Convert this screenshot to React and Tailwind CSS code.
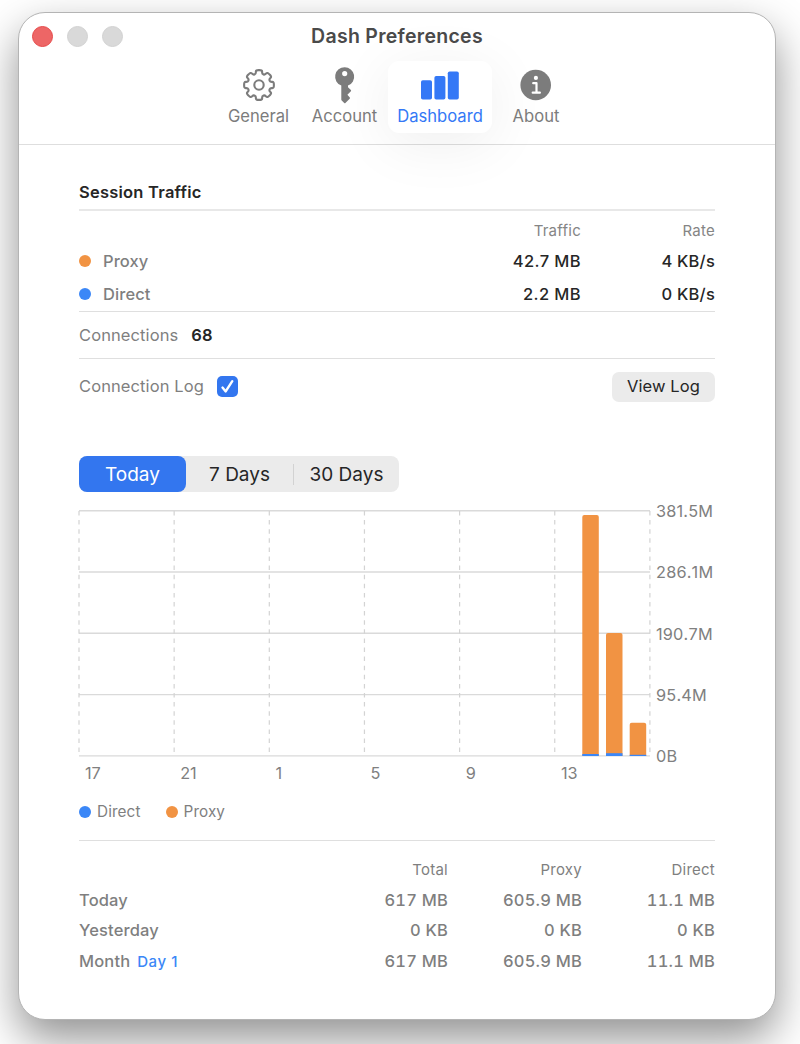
import React from "react";
import clsx from "clsx";

const ORANGE = "#f19343";
const BLUE = "#3b87f7";

// Walks round the cog and rounds every corner with a quadratic curve
function gearPath(cx, cy) {
  const points = [];
  for (let i = 0; i < 8; i++) {
    const a = i * 45;
    [
      [11.6, a - 15.5],
      [15.2, a - 12],
      [15.2, a + 12],
      [11.6, a + 15.5],
    ].forEach(([r, deg]) => {
      const rad = ((deg - 90) * Math.PI) / 180;
      points.push([cx + r * Math.cos(rad), cy + r * Math.sin(rad)]);
    });
  }
  const lerp = (p, q, t) => [p[0] + (q[0] - p[0]) * t, p[1] + (q[1] - p[1]) * t];
  const fmt = (p) => `${p[0].toFixed(2)} ${p[1].toFixed(2)}`;
  return (
    points
      .map((p, i) => {
        const prev = points[(i + points.length - 1) % points.length];
        const next = points[(i + 1) % points.length];
        return `${i === 0 ? "M" : "L"}${fmt(lerp(p, prev, 0.42))}Q${fmt(p)} ${fmt(lerp(p, next, 0.42))}`;
      })
      .join("") + "Z"
  );
}

function GearIcon() {
  return (
    <svg width="34" height="40" viewBox="0 0 34 40" fill="none" stroke="currentColor" strokeWidth="2.1">
      <path d={gearPath(17, 20)} strokeLinejoin="round" />
      <circle cx="17" cy="20" r="4.7" />
    </svg>
  );
}

function KeyIcon() {
  return (
    <svg width="34" height="40" viewBox="0 0 34 40" fill="currentColor">
      <path
        fillRule="evenodd"
        d="M16.7 2.2a9.5 9.5 0 0 0-3.4 18.4v13.8q0 .6.4 1l2.5 2.6q.6.6 1.2 0l4.3-4.2q.6-.6.1-1.2l-2.4-2.8 3.5-3.6q.5-.6 0-1.2l-2.9-2.8v-1.6A9.5 9.5 0 0 0 16.7 2.2Zm0 3.8a2.6 2.6 0 1 1 0 5.2 2.6 2.6 0 0 1 0-5.2Z"
      />
    </svg>
  );
}

function BarsIcon() {
  return (
    <svg width="40" height="40" viewBox="0 0 40 40" fill="currentColor">
      <rect x="1" y="15.2" width="11" height="19.3" rx="1.8" />
      <rect x="14.4" y="11" width="11" height="23.5" rx="1.8" />
      <rect x="27.8" y="6.5" width="11" height="28" rx="1.8" />
    </svg>
  );
}

function InfoIcon() {
  return (
    <svg width="34" height="40" viewBox="0 0 34 40">
      <circle cx="16.7" cy="20" r="15.3" fill="currentColor" />
      <circle cx="16.9" cy="12.9" r="2.1" fill="#fff" />
      <path d="M14.2 18.2h3.3v9.5M13.7 27.7h7.2" fill="none" stroke="#fff" strokeWidth="2.2" strokeLinecap="round" strokeLinejoin="round" />
    </svg>
  );
}

const tabs = [
  { label: "General", Icon: GearIcon, width: "w-[85px]" },
  { label: "Account", Icon: KeyIcon, width: "w-[85px]" },
  { label: "Dashboard", Icon: BarsIcon, width: "w-[104px]", active: true },
  { label: "About", Icon: InfoIcon, width: "w-[86px]" },
];

function Toolbar() {
  return (
    <header className="h-[132px] border-b border-[#dedede]">
      <div className="grid h-[47px] grid-cols-[1fr_auto_1fr] items-center">
        <div className="flex gap-3.5 pl-[13px]">
          <span className="size-[21px] rounded-full border border-[#e64a4a] bg-[#ed6666]" />
          <span className="size-[21px] rounded-full border border-[#d2d2d2] bg-[#d9d9d9]" />
          <span className="size-[21px] rounded-full border border-[#d2d2d2] bg-[#d9d9d9]" />
        </div>
        <h1 className="pt-px text-[19.5px] font-semibold tracking-[0.28px] text-[#4a4a4a]">Dash Preferences</h1>
      </div>
      <nav className="flex gap-px pl-[197px] pt-px">
        {tabs.map(({ label, Icon, width, active }) => (
          <button
            key={label}
            className={clsx(
              "flex h-[72px] flex-col items-center rounded-[11px] pt-[4px]",
              width,
              active ? "bg-white text-[#3478f6] shadow-[0_10px_60px_rgba(0,0,0,0.07)]" : "text-[#7c7c7c]"
            )}
          >
            <Icon />
            <span className="text-[16.6px] leading-[22px]">{label}</span>
          </button>
        ))}
      </nav>
    </header>
  );
}

function Dot({ color }) {
  return <span className={clsx("size-3 rounded-full", color)} />;
}

function SessionRow({ color, label, traffic, rate }) {
  return (
    <div className="grid h-[33px] grid-cols-[1fr_134px_134px] items-center">
      <div className="flex items-center gap-3 font-medium text-[#7f7f7f]">
        <Dot color={color} />
        <span className="pt-px">{label}</span>
      </div>
      <div className="pt-px text-right font-medium tracking-[0.4px] text-[#262626]">{traffic}</div>
      <div className="pt-px text-right font-medium tracking-[0.2px] text-[#262626]">{rate}</div>
    </div>
  );
}

function Session() {
  return (
    <section className="text-[16.5px] tracking-[0.1px]">
      <h2 className="flex h-[36px] items-center border-b-2 border-[#e8e8e8] pt-px font-semibold tracking-[0.23px] text-[#262626]">Session Traffic</h2>
      <div className="grid h-[33px] grid-cols-[1fr_134px_134px] items-center pt-2 text-right text-[15px] tracking-[0.25px] text-[#858585]">
        <span />
        <span>Traffic</span>
        <span>Rate</span>
      </div>
      <SessionRow color="bg-[#f19343]" label="Proxy" traffic="42.7 MB" rate="4 KB/s" />
      <SessionRow color="bg-[#3b87f7]" label="Direct" traffic="2.2 MB" rate="0 KB/s" />
      <div className="mt-px flex h-12 items-center gap-[13px] border-y border-[#dfdfdf] text-[#7f7f7f]">
        Connections
        <span className="font-semibold text-[#262626]">68</span>
      </div>
      <div className="flex h-14 items-center justify-between pb-px">
        <label className="flex items-center gap-[13px] text-[#7f7f7f]">
          Connection Log
          <span className="flex size-[21px] items-center justify-center rounded-[5px] bg-[#3376ef]">
            <svg width="15" height="15" viewBox="0 0 15 15" fill="none" stroke="#fff" strokeWidth="2.4" strokeLinecap="round" strokeLinejoin="round">
              <path d="M2.5 8.6l3.2 3.8 6.6-10.2" />
            </svg>
          </span>
        </label>
        <button className="h-[30px] w-[103px] rounded-[7px] bg-[#ebebeb] text-[#262626]">View Log</button>
      </div>
    </section>
  );
}

function RangePicker() {
  return (
    <div className="flex h-9 w-[320px] items-center rounded-[8px] bg-[#ebebeb] text-[19px] text-[#262626]">
      <button className="h-full w-[107px] rounded-[8px] bg-[#3376ef] pt-[3px] text-white">Today</button>
      <button className="w-[107px] pt-[3px]">7 Days</button>
      <span className="h-[21px] w-px bg-[#d2d2d2]" />
      <button className="w-[105px] pt-[3px]">30 Days</button>
    </div>
  );
}

const yLabels = ["381.5M", "286.1M", "190.7M", "95.4M", "0B"];
const xLabels = ["17", "21", "1", "5", "9", "13"];
const bars = [
  { x: 503.3, top: 5, direct: 2 },
  { x: 527, top: 123, direct: 2.8 },
  { x: 550.7, top: 212.7, direct: 1.2 },
];

function TrafficChart() {
  return (
    <div>
      <div className="flex">
        <svg width="571" height="247" viewBox="0 0 571 247" className="block overflow-visible">
          {yLabels.map((label, i) => (
            <line key={label} x1="0" x2="571" y1={0.7 + i * 61.3} y2={0.7 + i * 61.3} stroke="#dadada" strokeWidth="1.4" />
          ))}
          {[0, 1, 2, 3, 4, 5, 6].map((i) => (
            <line key={i} x1={i * 95.15} x2={i * 95.15} y1="1" y2="242" stroke="#d3d3d3" strokeWidth="1.2" strokeDasharray="4.5 4.6" />
          ))}
          {bars.map(({ x, top, direct }) => (
            <g key={x}>
              <path d={`M${x} 246V${top + 2}q0-2 2-2h12.5q2 0 2 2V246z`} fill={ORANGE} />
              <rect x={x} y={246 - direct} width="16.5" height={direct} fill={BLUE} />
            </g>
          ))}
        </svg>
        <div className="-my-[9px] flex flex-col justify-between pl-[6px] text-[16.3px] leading-5 tracking-[0.2px] text-[#808080] [font-kerning:none]">
          {yLabels.map((label) => (
            <span key={label}>{label}</span>
          ))}
        </div>
      </div>
      <div className="flex pt-[4px] text-[16.3px] leading-6 text-[#808080]">
        {xLabels.map((label) => (
          <span key={label} className="w-[95.2px] pl-[6px]">
            {label}
          </span>
        ))}
      </div>
      <div className="flex gap-[25px] pt-[15px] text-[15.3px] leading-6 tracking-[0.1px] text-[#7f7f7f]">
        <span className="flex items-center gap-1.5">
          <Dot color="bg-[#3b87f7]" />
          Direct
        </span>
        <span className="flex items-center gap-1.5">
          <Dot color="bg-[#f19343]" />
          Proxy
        </span>
      </div>
    </div>
  );
}

const totals = [
  { label: "Today", values: ["617 MB", "605.9 MB", "11.1 MB"] },
  { label: "Yesterday", values: ["0 KB", "0 KB", "0 KB"] },
  { label: "Month", note: "Day 1", values: ["617 MB", "605.9 MB", "11.1 MB"] },
];

function Totals() {
  return (
    <section className="mt-4 border-t border-[#dfdfdf] pt-[14px] font-medium text-[#7f7f7f]">
      <div className="grid h-[30px] grid-cols-[1fr_134px_134px_133px] items-center text-right text-[15px] font-normal tracking-[0.25px]">
        <span />
        <span>Total</span>
        <span>Proxy</span>
        <span>Direct</span>
      </div>
      {totals.map(({ label, note, values }) => (
        <div key={label} className="grid h-[30.4px] grid-cols-[1fr_134px_134px_133px] items-center text-[16.5px]">
          <div className="flex items-baseline gap-[7px] tracking-[0.15px]">
            {label}
            {note && <span className="text-[15px] tracking-[0.5px] text-[#3b87f7] [font-kerning:none]">{note}</span>}
          </div>
          {values.map((value, i) => (
            <span key={i} className="text-right tabular-nums tracking-[0.2px] [font-kerning:none]">
              {value}
            </span>
          ))}
        </div>
      ))}
    </section>
  );
}

export default function App() {
  return (
    <div className="h-[1044px] w-[800px] overflow-hidden bg-white pl-[18px] pt-3 font-['Inter',sans-serif]">
      <div className="h-[1008px] w-[758px] rounded-[27px] border border-[#b4b4b4] bg-white shadow-[0_19px_44px_rgba(0,0,0,0.43)]">
        <Toolbar />
        <main className="px-[60px] pt-[30px]">
          <Session />
          <div className="pb-[18px] pt-[41px]">
            <RangePicker />
          </div>
          <TrafficChart />
          <Totals />
        </main>
      </div>
    </div>
  );
}
